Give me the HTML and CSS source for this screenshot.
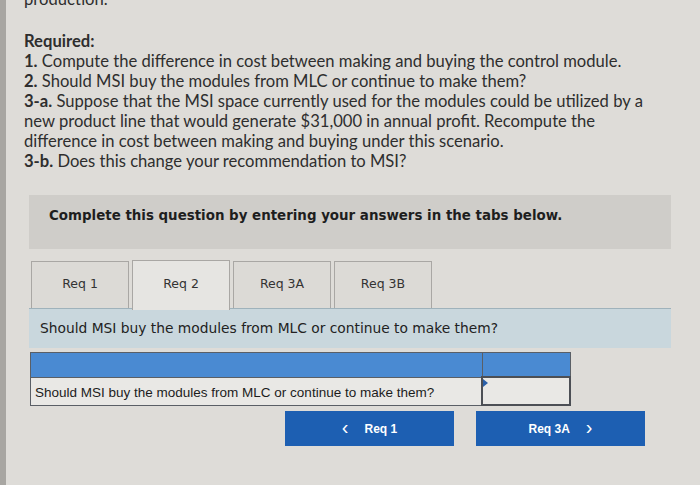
FILE: index.html
```html
<!DOCTYPE html>
<html lang="en">
<head>
<meta charset="utf-8">
<title>Required</title>
<link rel="stylesheet" href="styles.css">
</head>
<body>
<div class="page">
  <div class="question">
    <p class="cut">production.</p>
    <p class="head">Required:</p>
    <p><b>1.</b> Compute the difference in cost between making and buying the control module.</p>
    <p><b>2.</b> Should MSI buy the modules from MLC or continue to make them?</p>
    <p><b>3-a.</b> Suppose that the MSI space currently used for the modules could be utilized by a new product line that would generate $31,000 in annual profit. Recompute the difference in cost between making and buying under this scenario.</p>
    <p><b>3-b.</b> Does this change your recommendation to MSI?</p>
  </div>

  <div class="work">
    <div class="banner">Complete this question by entering your answers in the tabs below.</div>

    <div class="tabs">
      <div class="tab">Req 1</div>
      <div class="tab active">Req 2</div>
      <div class="tab">Req 3A</div>
      <div class="tab">Req 3B</div>
    </div>

    <div class="prompt">Should MSI buy the modules from MLC or continue to make them?</div>

    <table class="answer">
      <tr class="hdr"><td class="c1"></td><td class="c2"></td></tr>
      <tr class="row"><td class="c1">Should MSI buy the modules from MLC or continue to make them?</td><td class="c2 input"><span class="mark"></span></td></tr>
    </table>

    <div class="nav">
      <button class="btn"><span class="chev">&lsaquo;</span> Req 1</button>
      <button class="btn">Req 3A <span class="chev">&rsaquo;</span></button>
    </div>
  </div>
</div>
</body>
</html>
```

FILE: styles.css
```css
html, body {
  margin: 0;
  padding: 0;
  width: 700px;
  height: 485px;
  overflow: hidden;
  background: #dedcd8;
}
.page {
  display: flow-root;
  height: 485px;
  border-left: 6px solid #a8a6a2;
  box-sizing: border-box;
}
.question {
  padding-left: 18px;
  font-family: Lato, "Open Sans", sans-serif;
  font-size: 16.6px;
  line-height: 20px;
  color: #2e2e2e;
  width: 638px;
  margin-top: -11px;
}
.question p { margin: 0; }
.question b { font-weight: 700; }
.question .cut { margin-bottom: 22px; }
.question .head { font-weight: 700; }
.work {
  margin-left: 23px;
  width: 642px;
  margin-top: 24px;
}
.banner {
  background: #cfcdc9;
  height: 54px;
  box-sizing: border-box;
  padding: 13px 0 0 20px;
  font-family: "DejaVu Sans", Verdana, sans-serif;
  font-weight: 700;
  font-size: 13.4px;
  color: #1e1e1e;
}
.tabs {
  display: flex;
  gap: 3px;
  margin-top: 11px;
  padding-left: 2px;
  align-items: flex-end;
}
.tab {
  width: 98px;
  height: 47px;
  box-sizing: border-box;
  border: 1px solid #a9a7a4;
  border-bottom: none;
  background: #dcdad6;
  font-family: "DejaVu Sans", Verdana, sans-serif;
  font-size: 12.5px;
  color: #333;
  display: flex;
  align-items: center;
  justify-content: center;
  padding-bottom: 4px;
}
.tab.active {
  background: #e6e5e2;
  height: 50px;
  margin-bottom: -2px;
  position: relative;
  z-index: 1;
}
.prompt {
  background: #c9d7dd;
  border-top: 1px solid #9fb2bb;
  height: 40px;
  box-sizing: border-box;
  padding: 11px 0 0 11px;
  font-family: "DejaVu Sans", Verdana, sans-serif;
  font-size: 13.8px;
  color: #222;
}
.answer {
  margin-top: 4px;
  margin-left: 1px;
  border-collapse: collapse;
  width: 541px;
  font-family: "Liberation Sans", Arial, sans-serif;
  font-size: 13.5px;
  color: #1c1c1c;
}
.answer td {
  border: 1px solid #5a5f66;
  padding: 0;
}
.answer .c2 { width: 86px; }
.hdr td {
  background: #4a8ad2;
  height: 23px;
}
.row td {
  background: #e9e8e5;
  height: 25px;
}
.row .c1 { padding: 2px 0 0 4px; }
.row .input {
  border: 2px solid #4c4f55;
  position: relative;
}
.mark {
  position: absolute;
  left: 0;
  top: 1px;
  width: 0;
  height: 0;
  border-top: 4px solid transparent;
  border-bottom: 4px solid transparent;
  border-left: 5px solid #2a5fa8;
}
.nav {
  display: flex;
  justify-content: flex-end;
  gap: 22px;
  padding-right: 26px;
  margin-top: 5px;
}
.btn {
  width: 169px;
  height: 35px;
  border: none;
  background: #1d5fb2;
  color: #fff;
  font-family: "Liberation Sans", Arial, sans-serif;
  font-weight: 700;
  font-size: 12px;
  padding: 0;
  display: flex;
  align-items: center;
  justify-content: center;
  gap: 16px;
}
.chev {
  font-size: 20px;
  font-weight: 400;
  line-height: 1;
  margin-top: -3px;
}
```
